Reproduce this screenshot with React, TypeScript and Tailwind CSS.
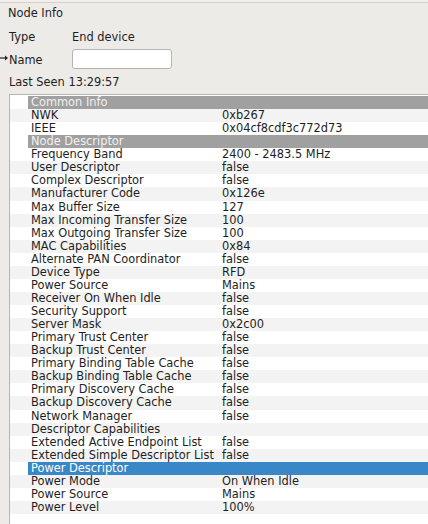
type Row = { name: string; value?: string; kind?: 'header' | 'selected' }

const ROWS: Row[] = [
  { name: 'Common Info', kind: 'header' },
  { name: 'NWK', value: '0xb267' },
  { name: 'IEEE', value: '0x04cf8cdf3c772d73' },
  { name: 'Node Descriptor', kind: 'header' },
  { name: 'Frequency Band', value: '2400 - 2483.5 MHz' },
  { name: 'User Descriptor', value: 'false' },
  { name: 'Complex Descriptor', value: 'false' },
  { name: 'Manufacturer Code', value: '0x126e' },
  { name: 'Max Buffer Size', value: '127' },
  { name: 'Max Incoming Transfer Size', value: '100' },
  { name: 'Max Outgoing Transfer Size', value: '100' },
  { name: 'MAC Capabilities', value: '0x84' },
  { name: 'Alternate PAN Coordinator', value: 'false' },
  { name: 'Device Type', value: 'RFD' },
  { name: 'Power Source', value: 'Mains' },
  { name: 'Receiver On When Idle', value: 'false' },
  { name: 'Security Support', value: 'false' },
  { name: 'Server Mask', value: '0x2c00' },
  { name: 'Primary Trust Center', value: 'false' },
  { name: 'Backup Trust Center', value: 'false' },
  { name: 'Primary Binding Table Cache', value: 'false' },
  { name: 'Backup Binding Table Cache', value: 'false' },
  { name: 'Primary Discovery Cache', value: 'false' },
  { name: 'Backup Discovery Cache', value: 'false' },
  { name: 'Network Manager', value: 'false' },
  { name: 'Descriptor Capabilities' },
  { name: 'Extended Active Endpoint List', value: 'false' },
  { name: 'Extended Simple Descriptor List', value: 'false' },
  { name: 'Power Descriptor', kind: 'selected' },
  { name: 'Power Mode', value: 'On When Idle' },
  { name: 'Power Source', value: 'Mains' },
  { name: 'Power Level', value: '100%' },
]

function TreeRow({ row, index }: { row: Row; index: number }) {
  const stripe = index % 2 === 1 ? 'bg-[#f3f3f3]' : 'bg-white'
  if (row.kind) {
    const bar = row.kind === 'header' ? 'bg-[#a0a0a0] text-[#f0f0f0]' : 'bg-[#3987c7] text-white'
    return (
      <div className="flex h-[13.07px] bg-white">
        <div className="w-[18px] shrink-0" />
        <div className={`flex-1 pl-[3px] leading-[13px] whitespace-nowrap ${bar}`}>{row.name}</div>
      </div>
    )
  }
  return (
    <div className={`flex h-[13.07px] leading-[13px] whitespace-nowrap ${stripe}`}>
      <div className="w-[212px] shrink-0 pl-[21px]">{row.name}</div>
      <div className="flex-1">{row.value}</div>
    </div>
  )
}

export default function App() {
  return (
    <div className="w-[428px] h-[524px] overflow-hidden bg-[#edebe8] text-[11.4px] text-[#1e1e1e] font-['DejaVu_Sans','Liberation_Sans',sans-serif]">
      <div className="h-[3px] bg-[#f2eeec] border-b border-[#d6d0cc]" />

      <div className="mt-[1px] h-[18px] leading-[18px] pl-[8px]">Node Info</div>

      <div className="mt-[7px] flex h-[18px] items-center">
        <span className="w-[72px] pl-[9px]">Type</span>
        <span>End device</span>
      </div>

      <div className="mt-[2px] flex h-[20px] items-center">
        <div className="w-[72px] flex items-center pt-[3px]">
          <svg width="9" height="6" viewBox="0 0 9 6" className="-mt-[6px]">
            <path d="M0 3H7" stroke="#222" strokeWidth="1.2" />
            <path d="M5 0.5L8 3L5 5.5Z" fill="#222" />
          </svg>
          <span>Name</span>
        </div>
        <div className="w-[100px] h-[20px] bg-white border border-[#b7b2ad] rounded-[3px]" />
      </div>

      <div className="mt-[4px] h-[18px] leading-[18px] pl-[9px]">Last Seen 13:29:57</div>

      <div className="mt-[3px] ml-[9px] w-[440px] h-[600px] bg-white border-l border-t border-[#b9b5b1] pt-px">
        {ROWS.map((row, i) => (
          <TreeRow key={i} row={row} index={i} />
        ))}
      </div>
    </div>
  )
}
